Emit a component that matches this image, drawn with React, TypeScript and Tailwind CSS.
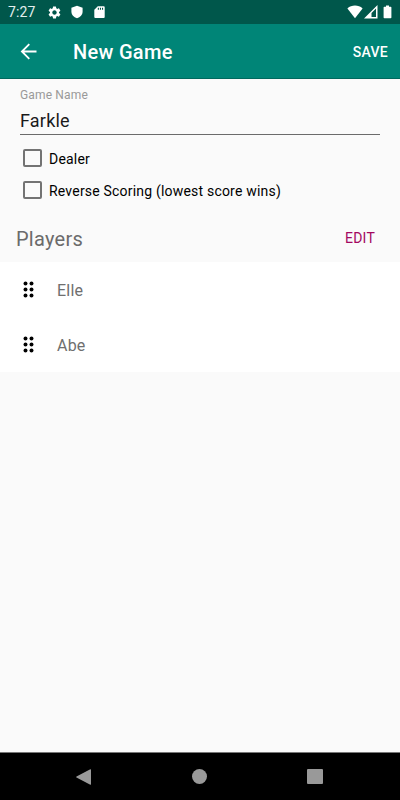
import { useState } from "react";
import { MdSettings } from "react-icons/md";

const PLAYERS = ["Elle", "Abe"];

function StatusBar() {
  return (
    <div className="h-6 shrink-0 bg-[#00574b] flex items-center text-white">
      <span className="ml-2 w-[39px] text-[14px] leading-6 tracking-[0.1px] text-[#e2efed]">7:27</span>
      <MdSettings className="w-[15px] h-[15px]" />
      <svg className="ml-[9px] w-3 h-3.5" viewBox="0 0 12 14" fill="currentColor">
        <path d="M6 .8.4 2.800v4.200c0 3 2.300 5.200 5.600 6.200 3.300-1 5.600-3.200 5.600-6.200V2.800z" />
      </svg>
      <svg className="ml-[11px] w-[11px] h-3.5" viewBox="0 0 11 14" fill="currentColor">
        <path
          fillRule="evenodd"
          d="M3.800 1.200H9.700a1 1 0 0 1 1 1V12a1 1 0 0 1-1 1H1.300a1 1 0 0 1-1-1V4.700zM3.800 2.700v2.100h1.100V2.700zM5.900 2.700v2.100H7V2.700zM8 2.700v2.100h1.100V2.700z"
        />
      </svg>
      <div className="flex-1" />
      <svg className="w-4 h-3.5" viewBox="0 0 16 14" fill="currentColor">
        <path d="M8 13.200 0.400 3.400C2.500 1.600 5.200 0.600 8 0.600s5.500 1 7.600 2.800z" />
      </svg>
      <svg className="ml-px w-3.5 h-3.5" viewBox="0 0 14 14" fill="currentColor">
        <path fillRule="evenodd" d="M13.500 0V13.500H0zM12 3.600 7.500 8.100V12H12z" />
      </svg>
      <svg className="ml-[5px] mr-2 w-[9px] h-3.5" viewBox="0 0 9 14" fill="currentColor">
        <path d="M3 0.500h3v1.300h1.600a.8.8 0 0 1 .8.8v9.800a.8.8 0 0 1-.8.8H1.400a.8.8 0 0 1-.8-.8V2.600a.8.8 0 0 1 .8-.8H3z" />
      </svg>
    </div>
  );
}

function AppBar() {
  return (
    <header className="h-[55px] shrink-0 bg-[#008577] border-b border-[#00695e] flex items-center text-white font-medium">
      <button className="ml-5 w-[18px] h-[18px]" aria-label="Back">
        <svg viewBox="0 0 18 18" className="w-full h-full" fill="none" stroke="currentColor" strokeWidth="1.8">
          <path d="M16.500 9.500H2M9.300 2.100 1.900 9.500l7.400 7.400" />
        </svg>
      </button>
      <h1 className="ml-[35px] flex-1 text-xl leading-6 pt-px tracking-[0.3px]">New Game</h1>
      <button className="mr-3 pt-0.5 text-sm tracking-[0.300px]">SAVE</button>
    </header>
  );
}

function CheckRow({ label }: { label: string }) {
  const [checked, setChecked] = useState(false);

  return (
    <label className="flex items-center h-8 pl-[3px] text-sm tracking-[0.2px] text-black">
      <input
        type="checkbox"
        checked={checked}
        onChange={() => setChecked(!checked)}
        className="appearance-none w-[19px] h-[18px] border-2 border-[#737373] rounded-xs checked:bg-[#d81b60]"
      />
      <span className="ml-[7px] pt-px">{label}</span>
    </label>
  );
}

function DragHandle() {
  return (
    <svg className="w-3 h-[17px] shrink-0" viewBox="0 0 12 17" fill="#000">
      {[2.500, 8.500, 14.500].map((y) => (
        <g key={y}>
          <circle cx="2.500" cy={y} r="1.950" />
          <circle cx="8.500" cy={y} r="1.950" />
        </g>
      ))}
    </svg>
  );
}

function NavBar() {
  return (
    <nav className="h-12 shrink-0 bg-black border-t border-[#777] flex items-center text-[#999]">
      <svg className="ml-[76px] w-4 h-4" viewBox="0 0 16 16" fill="currentColor">
        <path d="M14.300 0.300a.5.5 0 0 1 .7.4v14.600a.5.5 0 0 1-.7.4L.5 8.400a.4.400 0 0 1 0-.8z" />
      </svg>
      <div className="ml-[100px] w-[15px] h-[15px] rounded-full bg-[#999]" />
      <div className="ml-[100px] w-4 h-[15px] rounded-[1px] bg-[#999]" />
    </nav>
  );
}

export default function App() {
  return (
    <div className="w-[400px] h-[800px] flex flex-col overflow-hidden bg-[#fafafa] font-[Roboto,sans-serif]">
      <StatusBar />
      <AppBar />

      {/* Game form */}
      <main className="flex-1">
        <div className="px-5 pt-2">
          <div className="border-b border-[#6b6b6b] h-[48px]">
            <div className="text-xs leading-4 tracking-[0.150px] text-[#999]">Game Name</div>
            <div className="text-lg leading-5 mt-2 tracking-[0.2px] text-[#1a1a1a]">Farkle</div>
          </div>
          <div className="pt-[7px]">
            <CheckRow label="Dealer" />
            <CheckRow label="Reverse Scoring (lowest score wins)" />
          </div>
        </div>

        {/* Players */}
        <div className="h-[56px] flex items-center justify-between pl-4 pr-[25px] pt-[11px]">
          <h2 className="-mt-0.5 text-xl leading-6 tracking-[0.250px] text-[#6b6b6b]">Players</h2>
          <button className="-mt-[3px] text-sm tracking-[0.200px] text-[#a3075f]">EDIT</button>
        </div>
        <ul className="bg-white">
          {PLAYERS.map((name) => (
            <li key={name} className="h-[55px] flex items-center pl-[23px]">
              <DragHandle />
              <span className="ml-[22px] pt-[3px] text-base tracking-[0.2px] text-[#6f6f6f]">{name}</span>
            </li>
          ))}
        </ul>
      </main>

      <NavBar />
    </div>
  );
}
